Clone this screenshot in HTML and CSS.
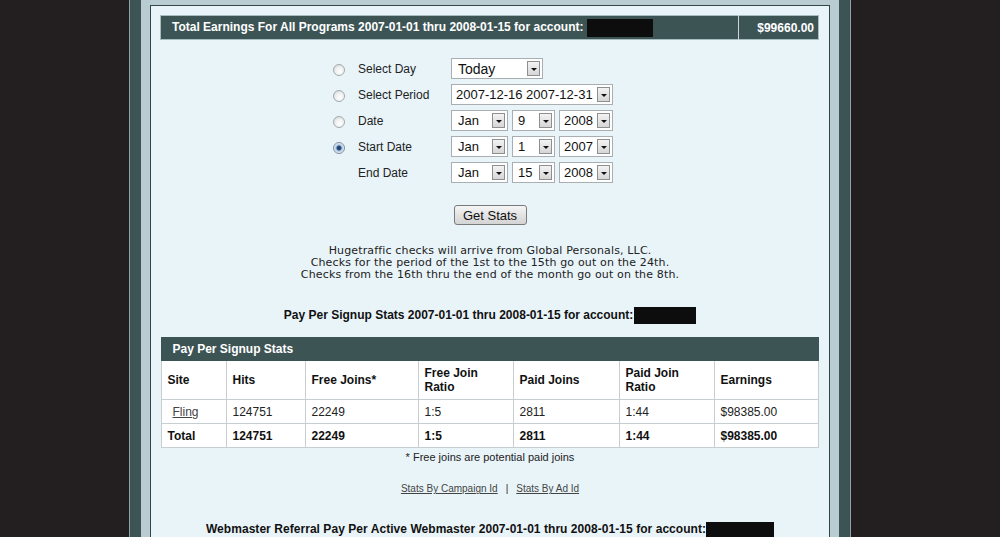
FILE: index.html
```html
<!DOCTYPE html>
<html>
<head>
<meta charset="utf-8">
<title>Stats</title>
<link rel="stylesheet" href="styles.css">
</head>
<body>
<div class="frame">
 <div class="rail">
  <div class="inset">
   <div class="content">
    <table class="total">
     <tr>
      <td class="total-label">Total Earnings For All Programs 2007-01-01 thru 2008-01-15 for account: <span class="redact r-title"></span></td>
      <td class="total-amt">$99660.00</td>
     </tr>
    </table>

    <div class="form-wrap">
     <div class="form">
      <span class="radio"></span><span class="lbl">Select Day</span>
      <div class="sels"><span class="sel w-today"><span class="val">Today</span><span class="btn"></span></span></div>

      <span class="radio"></span><span class="lbl">Select Period</span>
      <div class="sels"><span class="sel w-period"><span class="val">2007-12-16 2007-12-31</span><span class="btn"></span></span></div>

      <span class="radio"></span><span class="lbl">Date</span>
      <div class="sels">
       <span class="sel w-mon"><span class="val">Jan</span><span class="btn"></span></span>
       <span class="sel w-day"><span class="val">9</span><span class="btn"></span></span>
       <span class="sel w-year"><span class="val">2008</span><span class="btn"></span></span>
      </div>

      <span class="radio on"></span><span class="lbl">Start Date</span>
      <div class="sels">
       <span class="sel w-mon"><span class="val">Jan</span><span class="btn"></span></span>
       <span class="sel w-day"><span class="val">1</span><span class="btn"></span></span>
       <span class="sel w-year"><span class="val">2007</span><span class="btn"></span></span>
      </div>

      <span class="noradio"></span><span class="lbl">End Date</span>
      <div class="sels">
       <span class="sel w-mon"><span class="val">Jan</span><span class="btn"></span></span>
       <span class="sel w-day"><span class="val">15</span><span class="btn"></span></span>
       <span class="sel w-year"><span class="val">2008</span><span class="btn"></span></span>
      </div>
     </div>
    </div>

    <div class="actions"><button class="get" type="button">Get Stats</button></div>

    <p class="info">Hugetraffic checks will arrive from Global Personals, LLC.<br>Checks for the period of the 1st to the 15th go out on the 24th.<br>Checks from the 16th thru the end of the month go out on the 8th.</p>

    <h2 class="heading h-signup">Pay Per Signup Stats 2007-01-01 thru 2008-01-15 for account:<span class="redact r-signup"></span></h2>

    <table class="stats">
     <colgroup>
      <col class="c1"><col class="c2"><col class="c3"><col class="c4"><col class="c5"><col class="c6"><col class="c7">
     </colgroup>
     <tr><th class="bar" colspan="7">Pay Per Signup Stats</th></tr>
     <tr class="head">
      <th>Site</th><th>Hits</th><th>Free Joins*</th><th>Free Join<br>Ratio</th><th>Paid Joins</th><th>Paid Join<br>Ratio</th><th>Earnings</th>
     </tr>
     <tr class="row">
      <td><a class="site" href="#">Fling</a></td><td>124751</td><td>22249</td><td>1:5</td><td>2811</td><td>1:44</td><td>$98385.00</td>
     </tr>
     <tr class="row sum">
      <td>Total</td><td>124751</td><td>22249</td><td>1:5</td><td>2811</td><td>1:44</td><td>$98385.00</td>
     </tr>
    </table>

    <p class="note">* Free joins are potential paid joins</p>

    <p class="links"><a href="#">Stats By Campaign Id</a><span class="sep">|</span><a href="#">Stats By Ad Id</a></p>

    <h2 class="heading h-web">Webmaster Referral Pay Per Active Webmaster 2007-01-01 thru 2008-01-15 for account:<span class="redact r-web"></span></h2>
   </div>
  </div>
 </div>
</div>
</body>
</html>
```

FILE: styles.css
```css
html, body {
  margin: 0;
  padding: 0;
}
body {
  background: #231f20;
  font-family: "Liberation Sans", Arial, sans-serif;
  font-size: 12px;
  color: #111;
  height: 537px;
  overflow: hidden;
}

/* ---------- frame ---------- */
.frame {
  width: 720px;
  margin: 0 auto 0 129px;
  border-left: 1px solid #8fa3a6;
  border-right: 1px solid #8fa3a6;
  min-height: 537px;
}
.rail {
  background: #3d5455;
  padding: 0 11px;
  min-height: 537px;
}
.inset {
  background: #b8ccd2;
  padding: 5px 9px 0;
  min-height: 532px;
}
.content {
  background: #e9f4f9;
  border: 1px solid #33474a;
  border-bottom: none;
  min-height: 600px;
  overflow: hidden;
}

/* ---------- total bar ---------- */
.total {
  border-collapse: collapse;
  width: 659px;
  margin: 9px 0 0 9px;
  background: #3d5455;
  border: 1px solid #a9bcc0;
}
.total td {
  height: 23px;
  padding: 0;
  color: #fff;
  font-weight: bold;
  font-size: 12px;
  white-space: nowrap;
}
.total-label {
  padding-left: 11px !important;
}
.total-amt {
  width: 75px;
  text-align: right;
  padding-right: 4px !important;
  border-left: 1px solid #c8d6d9;
}
.redact {
  display: inline-block;
  background: #0d0d0d;
  vertical-align: middle;
}
.r-title { width: 66px; height: 18px; }
.r-signup { width: 62px; height: 17px; margin-left: 1px; }
.r-web { width: 68px; height: 17px; }

/* ---------- form ---------- */
.form-wrap {
  display: flex;
  justify-content: center;
  padding-right: 34px;
  margin-top: 18px;
}
.form {
  display: grid;
  grid-template-columns: 12px 80px 162px;
  grid-auto-rows: 21px;
  column-gap: 13px;
  row-gap: 5px;
  align-items: center;
}
.lbl {
  font-size: 12px;
  color: #222;
}
.radio, .noradio {
  width: 12px;
  height: 12px;
  box-sizing: border-box;
}
.radio {
  border-radius: 50%;
  border: 1px solid #a3a9ad;
  background: radial-gradient(circle at 60% 65%, #ffffff 0%, #f1f1f1 45%, #cfd2d4 100%);
  position: relative;
  top: 1px;
}
.radio.on {
  border-color: #7f8fa0;
  background: radial-gradient(circle at 50% 50%, #1b3a66 0%, #2b4f82 28%, #a8c3dc 42%, #e6eef6 70%, #c3ccd4 100%);
}
.sels {
  display: flex;
  gap: 4px;
  height: 21px;
}
.sel {
  position: relative;
  display: flex;
  align-items: center;
  box-sizing: border-box;
  height: 21px;
  background: #fff;
  border: 1px solid #a9aeb2;
  font-size: 13px;
  color: #111;
  padding-left: 6px;
}
.val {
  white-space: nowrap;
}
.w-today { width: 92px; font-size: 14px; }
.w-period { width: 162px; padding-left: 4px; }
.w-mon { width: 57px; }
.w-day { width: 43px; padding-left: 5px; }
.w-year { width: 54px; padding-left: 4px; }
.btn {
  position: absolute;
  right: 2px;
  top: 2px;
  bottom: 2px;
  width: 13px;
  box-sizing: border-box;
  border: 1px solid #8d8f91;
  background: linear-gradient(#f3f3f3, #d6d6d6);
}
.btn::after {
  content: "";
  position: absolute;
  left: 3px;
  top: 6px;
  border-left: 3px solid transparent;
  border-right: 3px solid transparent;
  border-top: 3px solid #111;
}

/* ---------- button ---------- */
.actions {
  display: flex;
  justify-content: center;
  margin-top: 22px;
}
.get {
  font-family: "Liberation Sans", Arial, sans-serif;
  font-size: 13px;
  color: #111;
  width: 73px;
  height: 20px;
  padding: 0;
  border: 1px solid #7a7a7a;
  border-radius: 3px;
  background: linear-gradient(#f6f6f6, #e3e3e3 50%, #d4d4d4);
}

/* ---------- info ---------- */
.info {
  margin: 20px 0 0;
  text-align: center;
  font-family: "DejaVu Sans", Verdana, sans-serif;
  font-size: 11px;
  letter-spacing: 0.15px;
  line-height: 12px;
  color: #222;
}

.heading {
  margin: 0;
  text-align: center;
  font-size: 12px;
  font-weight: bold;
  color: #111;
  line-height: 18px;
  white-space: nowrap;
}
.h-signup { margin-top: 25px; }
.h-web { margin-top: 25px; letter-spacing: 0.05px; }

/* ---------- stats table ---------- */
.stats {
  border-collapse: collapse;
  width: 656px;
  margin: 13px auto 0;
  background: #fff;
  table-layout: fixed;
}
.c1 { width: 65px; }
.c2 { width: 79px; }
.c3 { width: 113px; }
.c4 { width: 95px; }
.c5 { width: 106px; }
.c6 { width: 95px; }
.c7 { width: 103px; }
.stats th, .stats td {
  border: 1px solid #c7ced1;
  text-align: left;
  padding: 0 0 0 5px;
  font-size: 12px;
}
.stats th.bar {
  background: #3d5455;
  border-color: #3d5455;
  color: #fff;
  height: 22px;
  padding-left: 10px;
}
.head th {
  height: 38px;
  line-height: 14px;
  color: #111;
}
.row td {
  height: 23px;
  color: #222;
}
.sum td {
  font-weight: bold;
  color: #111;
}
.site {
  color: #444;
  margin-left: 5px;
}

.note {
  margin: 3px 0 0;
  text-align: center;
  font-size: 11px;
  line-height: 12px;
  color: #222;
}
.links {
  margin: 20px 0 0;
  text-align: center;
  font-size: 10px;
  line-height: 12px;
}
.links a {
  color: #444;
}
.sep {
  margin: 0 8px;
  color: #222;
}
```
